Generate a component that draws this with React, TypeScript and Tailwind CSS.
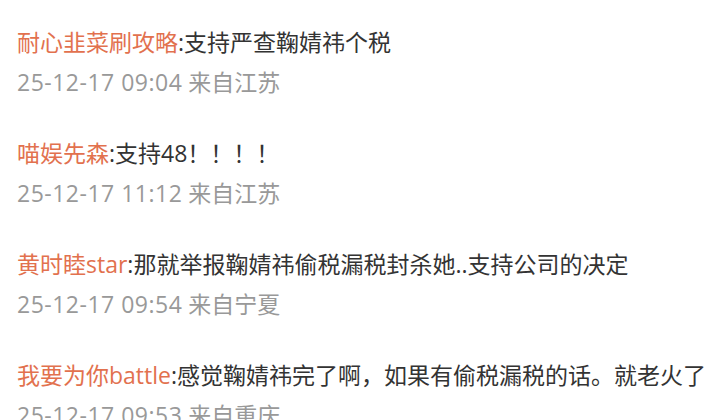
import React from "react";

type Comment = {
    name: string;
    text: string;
    time: string;
    place: string;
};

const comments: Comment[] = [
    { name: "耐心韭菜刷攻略", text: "支持严查鞠婧祎个税", time: "25-12-17 09:04", place: "来自江苏" },
    { name: "喵娱先森", text: "支持48！！！！", time: "25-12-17 11:12", place: "来自江苏" },
    { name: "黄时睦star", text: "那就举报鞠婧祎偷税漏税封杀她..支持公司的决定", time: "25-12-17 09:54", place: "来自宁夏" },
    { name: "我要为你battle", text: "感觉鞠婧祎完了啊，如果有偷税漏税的话。就老火了", time: "25-12-17 09:53", place: "来自重庆" },
];

export default function App() {
    return (
        <div className="w-[722px] h-[420px] overflow-hidden bg-white pl-[17px] pt-[27px] font-['Open_Sans','Noto_Sans_CJK_SC',sans-serif]">
            <div className="flex flex-col gap-[41px]">
                {comments.map((c) => (
                    <div key={c.time} className="flex flex-col gap-[10px]">
                        <p className="text-[23px] leading-[30px] text-[#333] whitespace-nowrap">
                            <span className="text-[#e2714e]">{c.name}</span>:{c.text}
                        </p>
                        <p className="text-[23px] leading-[30px] text-[#999] whitespace-nowrap">
                            <span className="tracking-[0.5px]">{c.time}</span> {c.place}
                        </p>
                    </div>
                ))}
            </div>
        </div>
    );
}
